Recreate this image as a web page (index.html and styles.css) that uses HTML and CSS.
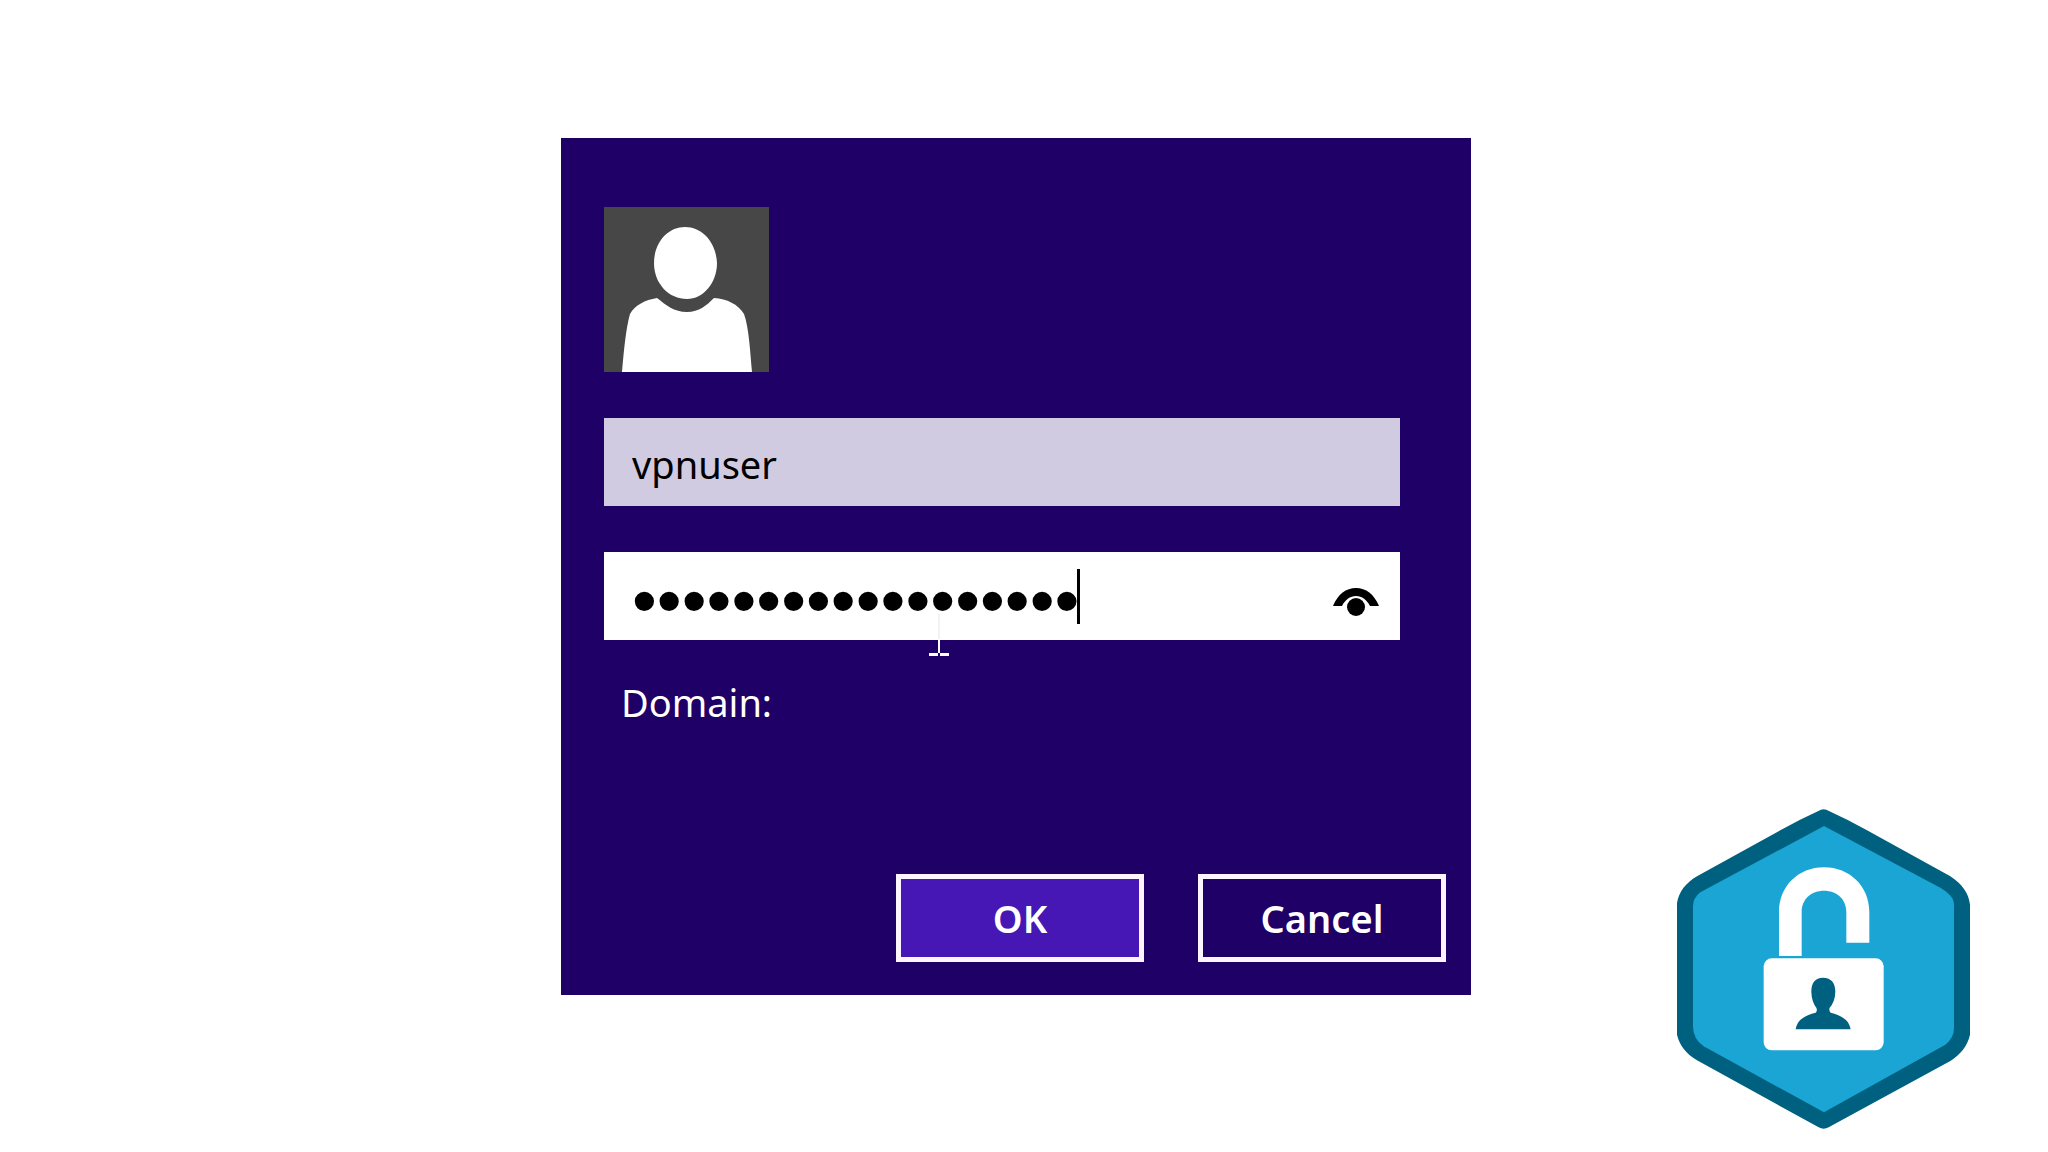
FILE: index.html
```html
<!DOCTYPE html>
<html lang="en">
<head>
  <meta charset="UTF-8">
  <meta name="viewport" content="width=device-width, initial-scale=1">
  <title>Sign in</title>
  <link rel="stylesheet" href="styles.css">
</head>
<body>
  <main class="page">
    <form class="dialog">
      <svg class="avatar" viewBox="0 0 165 165" role="img" aria-label="User picture">
        <rect width="165" height="165" fill="#474747"/>
        <path d="M81 20C99 20 112 36 113 56C113 76 99 92 83 92C65 92 50 77 50 56C50 35 64 20 81 20Z" fill="#fff"/>
        <path d="M18 165C20 142 22 121 26 107C31 98 41 93 53 91C62 98 70 105 83 105C95 105 103 98 110 91C123 92 134 97 140 107C145 121 146 143 148 165Z" fill="#fff"/>
      </svg>

      <div class="fields">
        <input class="field user" type="text" value="vpnuser" aria-label="User name">
        <div class="password-box">
          <input class="field password" type="password" value="abcdefghijklmnopqr" aria-label="Password">
          <span class="caret"></span>
          <button class="reveal" type="button" aria-label="Show password">
            <svg viewBox="0 0 50 32">
              <path d="M2 20C7 8 15 2 25 2C35 2 43 8 48 20L39 20C36 14 31 10 25 10C19 10 14 14 11 20Z"/>
              <circle cx="25" cy="21" r="9"/>
            </svg>
          </button>
          <svg class="pointer" viewBox="0 0 20 44">
            <path d="M9 0h2v25h-2z" fill="#f2f2f2"/>
            <path d="M9 25h2v14h-2zM0 39h9v3h-9zM11 39h9v3h-9z" fill="#fff"/>
          </svg>
        </div>
      </div>

      <p class="domain">Domain:</p>

      <div class="actions">
        <button class="btn btn-ok" type="button">OK</button>
        <button class="btn" type="button">Cancel</button>
      </div>
    </form>

    <!-- Unlocked padlock badge -->
    <svg class="badge" viewBox="50 58 879 960" role="img" aria-label="Unlocked">
      <path d="M482 60Q490 57 498 60Q560 88 620 122L870 260C905 283 925 310 929 345V735C922 768 900 795 870 814L505 1013Q490 1021 475 1013L110 812C78 792 58 768 50 735V340C56 306 76 280 110 260L360 122Q420 88 482 60Z" fill="#00607f"/>
      <path d="M491 109L840 294C862 308 881 322 881 345V715Q881 745 855 765L491 968L130 770Q98 748 98 710V350Q98 325 120 308Z" fill="#1ba5d4"/>
      <path d="M356 499V367C356 290 414 233 491 233C568 233 627 290 627 367V459H558V367C558 328 529 303 491 303C453 303 424 328 424 367V499Z" fill="#fff"/>
      <rect x="310" y="506" width="360" height="276" rx="24" fill="#fff"/>
      <path d="M406 719C411 691 431 678 466 669Q472 663 468 654Q454 636 453 606C453 580 464 564 488 564C513 564 525 580 525 606Q524 636 508 654Q505 663 511 669C545 678 566 691 571 719Z" fill="#00607f"/>
    </svg>
  </main>
</body>
</html>
```
FILE: styles.css
```css
* {
  box-sizing: border-box;
}
body {
  margin: 0;
  background-color: #fff;
  font-family: "Noto Sans", "Open Sans", sans-serif;
  font-size: 38px;
}
.page {
  display: grid;
  grid-template-columns: 561fr 910fr 577fr;
  min-height: 100vh;
}
.dialog {
  grid-column: 2;
  align-self: start;
  margin-top: 138px;
  padding: 69px 25px 33px 43px;
  background-color: #1f0066;
  color: #fff;
}
.avatar {
  display: block;
  width: 165px;
  height: 165px;
}
.fields {
  display: flex;
  flex-direction: column;
  gap: 46px;
  margin: 46px 46px 0 0;
}
.field {
  display: block;
  width: 100%;
  height: 88px;
  border: none;
  border-radius: 0;
  outline: none;
  color: #000;
  background-color: #fff;
}
.user {
  padding: 4px 28px 0;
  font: inherit;
  background-color: #d1cbe2;
}
.password-box {
  position: relative;
}
.password {
  padding: 8px 100px 0 28px;
  font-family: "Liberation Sans", Arial, sans-serif;
  font-size: 71px;
}
.caret {
  position: absolute;
  top: 17px;
  left: 473px;
  width: 3px;
  height: 55px;
  background-color: #000;
}
.reveal {
  position: absolute;
  top: 34px;
  right: 19px;
  width: 50px;
  height: 32px;
  padding: 0;
  border: none;
  background: none;
}
.reveal svg {
  display: block;
}
.pointer {
  position: absolute;
  top: 62px;
  left: 325px;
  width: 20px;
  height: 44px;
}
.domain {
  margin: 34px 0 0 17px;
  line-height: 56px;
}
.actions {
  display: flex;
  justify-content: flex-end;
  gap: 54px;
  margin-top: 144px;
}
.btn {
  width: 248px;
  height: 88px;
  padding: 0;
  border: 5px solid #fcf4ff;
  background-color: #1f0066;
  color: #fff;
  font: inherit;
  font-weight: 600;
}
.btn-ok {
  background-color: #4617b4;
}
.badge {
  grid-column: 3;
  align-self: end;
  justify-self: end;
  width: 293px;
  height: 320px;
  margin: 0 78px 23px 0;
}
```
